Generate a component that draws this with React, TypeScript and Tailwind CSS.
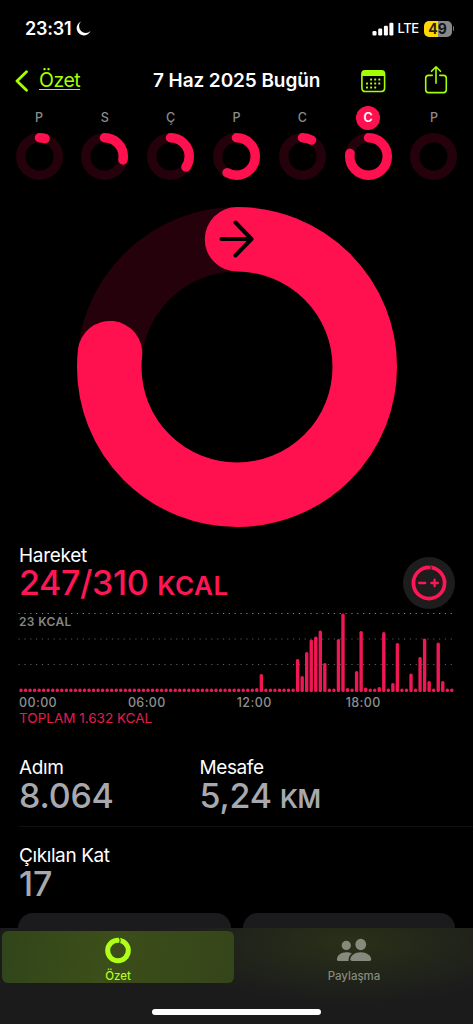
import React from 'react';

interface RingProps {
  size: number;
  stroke: number;
  progress: number;
  children?: React.ReactNode;
}

const days = [
  { label: 'P', progress: 0.048 },
  { label: 'S', progress: 0.278 },
  { label: 'Ç', progress: 0.343 },
  { label: 'P', progress: 0.58 },
  { label: 'C', progress: 0.08 },
  { label: 'C', progress: 0.773, today: true },
  { label: 'P', progress: 0 },
];

// Bar heights by quarter hour, every other slot is a resting dot
const activity: Record<number, number> = {
  52: 4, 53: 18, 61: 33, 62: 16, 63: 40, 64: 52.5, 65: 55.5, 66: 61.5, 67: 29,
  70: 53, 71: 78.5, 72: 4, 74: 21, 75: 61, 76: 4.5, 79: 5, 80: 60, 82: 9,
  83: 49, 86: 18.5, 88: 35, 89: 53.5, 90: 11, 92: 49.5, 93: 11,
};

const Ring: React.FC<RingProps> = ({ size, stroke, progress, children }) => {
  const c = size / 2;
  const r = (size - stroke) / 2;
  const length = 2 * Math.PI * r;

  return (
    <svg className="block" width={size} height={size} viewBox={`0 0 ${size} ${size}`} fill="none">
      <circle cx={c} cy={c} r={r} stroke="#25010b" strokeWidth={stroke} />
      {progress > 0 && (
        <circle
          cx={c}
          cy={c}
          r={r}
          stroke="#ff114f"
          strokeWidth={stroke}
          strokeLinecap="round"
          strokeDasharray={`${length * progress} ${length}`}
          transform={`rotate(-90 ${c} ${c})`}
        />
      )}
      {children}
    </svg>
  );
};

const StatusBar = () => (
  <div className="flex h-[57px] items-center justify-between pr-[19px] pl-[25px]">
    <div className="flex items-center gap-[5px]">
      <span className="text-[18px] font-semibold tracking-[-0.2px]">23:31</span>
      <svg width="15" height="15" viewBox="0 0 15 15" fill="#fff">
        <path d="M5 .6A7.200 7.200 0 1 0 14.500 10 6.200 6.200 0 0 1 5 .6Z" />
      </svg>
    </div>
    <div className="flex items-center">
      <svg width="22" height="14" viewBox="0 0 22 14" fill="#fff">
        <rect x="0.5" y="9" width="4" height="4.5" rx="1.2" />
        <rect x="6.2" y="6.6" width="4" height="6.9" rx="1.2" />
        <rect x="11.9" y="3.8" width="4" height="9.7" rx="1.2" />
        <rect x="17.4" y="0.7" width="4" height="12.8" rx="1.2" />
      </svg>
      <span className="ml-[4px] text-[13px] font-medium tracking-[-0.5px]">LTE</span>
      <div className="ml-[5px] flex h-[16px] w-[28px] items-center justify-center rounded-[5px] bg-[linear-gradient(90deg,#ffd60a_50%,#88888b_50%)] text-[14px] font-bold text-black/85">
        49
      </div>
      <div className="ml-[1px] h-[5px] w-[1.5px] rounded-r-full bg-[#77777a]" />
    </div>
  </div>
);

const Header = () => (
  <header className="flex h-[46px] items-center pt-px text-[#a6ff00]">
    <div className="flex w-[153px] items-center pl-[15px]">
      <svg width="14" height="22" viewBox="0 0 14 22" fill="none" stroke="currentColor" strokeWidth="2.800" strokeLinecap="round" strokeLinejoin="round">
        <path d="M11.500 1.700 2 11l9.500 9.300" />
      </svg>
      <span className="ml-[10px] text-[19.5px] tracking-[-0.5px] underline decoration-1 underline-offset-[2px]">Özet</span>
    </div>
    <h1 className="w-[208px] pt-px text-[19px] font-semibold tracking-[-0.08px] whitespace-nowrap text-white">7 Haz 2025 Bugün</h1>
    <svg width="25" height="24" viewBox="0 0 25 24" fill="currentColor">
      <rect x="0.900" y="1.900" width="22.700" height="20.600" rx="3.200" fill="none" stroke="currentColor" strokeWidth="1.600" />
      <path d="M1 7V4.500Q1 1.500 4 1.500H20.500Q23.500 1.500 23.500 4.500V7Z" />
      {[9.5, 13.5, 17.5].map((y, row) =>
        [5, 9.1, 13.2, 17.3]
          .filter((_, col) => !(row === 0 && col === 0) && !(row === 2 && col === 3))
          .map((x) => <rect key={`${x}-${y}`} x={x} y={y} width="2" height="2" rx="0.5" />)
      )}
    </svg>
    <svg className="-mt-px ml-[38px]" width="25" height="30" viewBox="0 0 25 30" fill="none" stroke="currentColor" strokeWidth="1.600" strokeLinecap="round" strokeLinejoin="round">
      <path d="M8.200 10.400H4.600Q1.700 10.400 1.700 13.300V24.700Q1.700 27.600 4.600 27.600H19.400Q22.300 27.600 22.300 24.700V13.300Q22.300 10.400 19.400 10.400H15.800" />
      <path d="M12 18.300V2.200M7.500 6.300 12 1.800l4.500 4.500" />
    </svg>
  </header>
);

const WeekRings = () => (
  <div className="flex justify-between px-[15.500px] pt-[3px]">
    {days.map((day, i) => (
      <div key={i} className="flex flex-col items-center">
        <span
          className={`flex h-[24px] w-[24px] items-center justify-center rounded-full pt-px text-[12.5px] ${
            day.today ? 'bg-[#ff114f] font-semibold text-white' : 'font-medium text-[#8c8c8c]'
          }`}
        >
          {day.label}
        </span>
        <div className="mt-[3px]">
          <Ring size={47} stroke={9.5} progress={day.progress} />
        </div>
      </div>
    ))}
  </div>
);

const ActivityChart = () => (
  <svg className="block" width="473" height="84" viewBox="0 0 473 84">
    {[2.5, 28, 53.5].map((y, i) => (
      <line
        key={y}
        x1="18.500"
        x2="455"
        y1={y}
        y2={y}
        stroke={i === 0 ? '#858585' : '#5c5c5c'}
        strokeWidth="1.100"
        strokeDasharray="1.200 4.640"
      />
    ))}
    {Array.from({ length: 96 }, (_, i) => {
      const h = activity[i] ?? 3.4;
      return <rect key={i} x={19.3 + i * 4.535} y={81 - h} width="3.400" height={h} rx="1.600" fill="#ef1854" />;
    })}
  </svg>
);

const Move = () => (
  <section>
    <div className="flex h-[67px] justify-between pr-[18px] pl-[19px]">
      <div>
        <h2 className="text-[19px] leading-[23px] tracking-[-0.3px]">Hareket</h2>
        <p className="text-[34px] leading-[32px] font-medium whitespace-nowrap text-[#ff1755]">
          <span className="tracking-[-0.4px]">247/310</span>
          <span className="ml-[9px] text-[26px] font-semibold tracking-[0.5px]">KCAL</span>
        </p>
      </div>
      <div className="mt-[13px] flex h-[52px] w-[52px] items-center justify-center rounded-full bg-[#1d1d1e]">
        <svg width="36" height="36" viewBox="0 0 36 36" fill="none" stroke="#ff1755" strokeLinecap="round">
          <circle cx="18" cy="18" r="15.600" strokeWidth="3.700" />
          <path d="M18.800 1l1.800 1.600-1 1.700" stroke="#1d1d1e" strokeWidth="1" />
          <path d="M8.200 18h6M20.300 18h6.600M23.600 14.700v6.600" strokeWidth="2.300" />
        </svg>
      </div>
    </div>
    <div className="relative h-[84px]">
      <ActivityChart />
      <span className="absolute top-[3px] left-[19px] text-[12px] leading-[16px] font-semibold tracking-[0.35px] text-[#858585]">23 KCAL</span>
    </div>
    <div className="flex h-[15px] pl-[19px] text-[12.5px] leading-[15px] font-medium tracking-[0.400px] text-[#8e8e8e]">
      {['00:00', '06:00', '12:00', '18:00'].map((time) => (
        <span key={time} className="w-[108.900px]">{time}</span>
      ))}
    </div>
    <p className="pl-[19px] text-[13.5px] leading-[17px] text-[#e51b50]">TOPLAM 1.632 KCAL</p>
  </section>
);

const Stat: React.FC<{ label: string; value: string; unit?: string }> = ({ label, value, unit }) => (
  <div className="w-[180.500px]">
    <h2 className="text-[19px] leading-[24px] tracking-[-0.4px]">{label}</h2>
    <p className="text-[34px] leading-[32px] font-medium tracking-[-0.2px] whitespace-nowrap text-[#a7a9ae]">
      {value}
      {unit && <span className="ml-[8px] text-[25.5px] font-semibold tracking-[-0.4px]">{unit}</span>}
    </p>
  </div>
);

const TabBar = () => (
  <nav className="absolute bottom-0 left-0 h-[96px] w-full bg-[#1b1b1c] bg-[radial-gradient(ellipse_190px_62px_at_350px_14px,#293018_0%,transparent_100%)]">
    <div className="flex pt-[3px] font-medium">
      <div className="ml-[2px] flex h-[52px] w-[232px] flex-col items-center rounded-[6px] bg-[linear-gradient(100deg,#30451a,#3c4e19_45%,#35451a)] pt-[6px] text-[#b0ff18]">
        <svg width="28" height="28" viewBox="0 0 28 28" fill="none">
          <circle cx="14" cy="14" r="10.700" stroke="currentColor" strokeWidth="5.200" />
          <path d="M15.200 0l1.100 3.300-.8 3.700" stroke="#3a4c19" strokeWidth="1.100" />
        </svg>
        <span className="mt-[5px] text-[11.5px] leading-[14px]">Özet</span>
      </div>
      <div className="flex h-[52px] flex-1 flex-col items-center pt-[6px] pl-px text-[#858a7d]">
        <svg width="36" height="28" viewBox="0 0 36 28" fill="currentColor">
          <circle cx="10" cy="8.800" r="4.800" />
          <ellipse cx="25" cy="7.800" rx="5.600" ry="6" />
          <path d="M.3 23.300C.3 18.500 5 15.700 10 15.700c2.200 0 4.200.5 5.800 1.500-2.400 1.700-3.600 4-3.400 7.800H2Q.3 25 .3 23.300Z" />
          <path d="M14.200 23.200c0-4 4.700-7.500 10.800-7.500s10.800 3.500 10.800 7.500q0 1.800-1.800 1.800H16q-1.800 0-1.800-1.800Z" />
        </svg>
        <span className="mt-[5px] text-[11.500px] leading-[14px]">Paylaşma</span>
      </div>
    </div>
    <div className="mx-auto mt-[26px] h-[6px] w-[169px] rounded-full bg-white" />
  </nav>
);

export default function App() {
  return (
    <div className="relative h-[1024px] w-[473px] overflow-hidden bg-black font-[Inter,sans-serif] text-white">
      <StatusBar />
      <Header />
      <WeekRings />
      <div className="mt-[26.500px] flex justify-center">
        <Ring size={320} stroke={64.500} progress={0.767}>
          <path
            d="M144.500 32H173M158.500 15.500 174.500 32 158.500 48.500"
            stroke="#000"
            strokeWidth="4"
            strokeLinecap="round"
            strokeLinejoin="round"
          />
        </Ring>
      </div>
      <div className="mt-[17.500px]">
        <Move />
      </div>
      <div className="mt-[29px] ml-[19px] flex h-[71px] border-b border-[#111112]">
        <Stat label="Adım" value="8.064" />
        <Stat label="Mesafe" value="5,24" unit="KM" />
      </div>
      <div className="mt-[17px] flex h-[69px] pl-[19px]">
        <Stat label="Çıkılan Kat" value="17" />
      </div>
      <div className="flex gap-[12px] px-[18px]">
        <div className="h-[40px] flex-1 rounded-t-[15px] bg-[#1b1b1d]" />
        <div className="h-[40px] flex-1 rounded-t-[15px] bg-[#1b1b1d]" />
      </div>
      <TabBar />
    </div>
  );
}
